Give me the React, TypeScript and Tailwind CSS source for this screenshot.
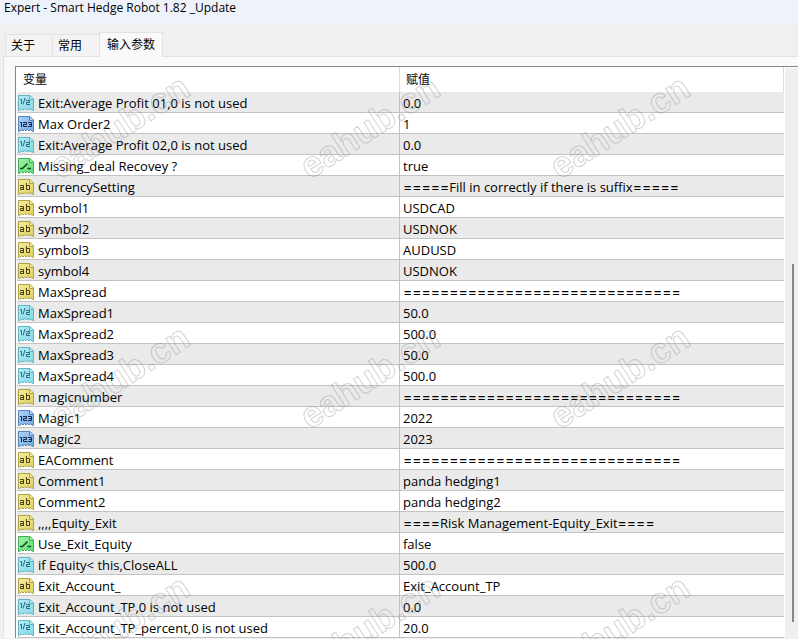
type Kind = "double" | "int" | "bool" | "string";

const rows: [Kind, string, string][] = [
  ["double", "Exit:Average Profit 01,0 is not used", "0.0"],
  ["int", "Max Order2", "1"],
  ["double", "Exit:Average Profit 02,0 is not used", "0.0"],
  ["bool", "Missing_deal Recovey ?", "true"],
  ["string", "CurrencySetting", "=====Fill in correctly if there is suffix====="],
  ["string", "symbol1", "USDCAD"],
  ["string", "symbol2", "USDNOK"],
  ["string", "symbol3", "AUDUSD"],
  ["string", "symbol4", "USDNOK"],
  ["string", "MaxSpread", "=============================="],
  ["double", "MaxSpread1", "50.0"],
  ["double", "MaxSpread2", "500.0"],
  ["double", "MaxSpread3", "50.0"],
  ["double", "MaxSpread4", "500.0"],
  ["string", "magicnumber", "=============================="],
  ["int", "Magic1", "2022"],
  ["int", "Magic2", "2023"],
  ["string", "EAComment", "=============================="],
  ["string", "Comment1", "panda hedging1"],
  ["string", "Comment2", "panda hedging2"],
  ["string", ",,,,Equity_Exit", "====Risk Management-Equity_Exit===="],
  ["bool", "Use_Exit_Equity", "false"],
  ["double", "if Equity< this,CloseALL", "500.0"],
  ["string", "Exit_Account_", "Exit_Account_TP"],
  ["double", "Exit_Account_TP,0 is not used", "0.0"],
  ["double", "Exit_Account_TP_percent,0 is not used", "20.0"],
];

const palette: Record<Kind, { light: string; fill: string; edge: string; ink: string }> = {
  double: { light: "#b5ecf5", fill: "#84d9e8", edge: "#5fb4c6", ink: "#1f6f80" },
  int: { light: "#b0d3f7", fill: "#74a9e0", edge: "#5585bd", ink: "#0b2550" },
  bool: { light: "#a0f3a5", fill: "#62dc78", edge: "#3fae58", ink: "#0a4a1c" },
  string: { light: "#f5ec9c", fill: "#dfd062", edge: "#b3a243", ink: "#4a4010" },
};

const glyphs: Record<Kind, string> = {
  double: "M2 4.5h1.5V9M7 3 5 9.5M8 5.5h3.5v2h-3v2H12",
  int: "M2 6.5h1.5V11M5 6.5h3.5v2h-3v2H9M10 6.5h3.5v4H10M11 8.5h3",
  bool: "M2 10.5h2.5L9.5 5.5M9.5 10.5H13",
  string: "M2 6.5h3.5V11M5.5 8.5h-3v2h3M8.5 4v6.5h3v-4h-3",
};

function TypeIcon({ kind }: { kind: Kind }) {
  const c = palette[kind];
  return (
    <svg width="16" height="16" viewBox="0 0 16 16" className="block shrink-0" aria-hidden="true">
      <defs>
        <linearGradient id={`fill-${kind}`} x1="0" y1="0" x2="1" y2="1">
          <stop offset="0" stopColor={c.light} />
          <stop offset="1" stopColor={c.fill} />
        </linearGradient>
      </defs>
      <path
        d="M.5.5H12L15.5 4v11.5l-2-.5-1-1.5-1.5 1.5-1.5-1.5L8 15l-1.5-1.5L5 15l-1.5-1.5-1 1.5-2 .5z"
        fill={`url(#fill-${kind})`}
        stroke={c.edge}
      />
      <path d="M11.5.8v3.7h3.7" fill={c.light} stroke={c.edge} />
      <path d={glyphs[kind]} fill="none" stroke={c.ink} strokeWidth={kind === "bool" ? 1.5 : 1} />
    </svg>
  );
}

const tabs = ["关于", "常用", "输入参数"];

// runs of "=" are set in a wider face than the words between them
function Value({ text }: { text: string }) {
  return (
    <>
      {text.split(/(=+)/).map((part, i) =>
        part.startsWith("=") ? (
          <span key={i} className="font-['Inter',sans-serif] text-[14px] leading-none">{part}</span>
        ) : (
          part
        ),
      )}
    </>
  );
}

function Watermark() {
  return (
    <svg className="pointer-events-none absolute inset-0 h-full w-full" aria-hidden="true">
      <defs>
        <pattern id="mark" width="250" height="250" patternUnits="userSpaceOnUse" x="50" y="0">
          <text
            transform="translate(10 180) rotate(-33)"
            fontFamily="Liberation Sans, sans-serif"
            fontSize="36"
            fontWeight="700"
            fill="none"
            stroke="#808080"
            strokeOpacity="0.35"
            strokeLinejoin="round"
          >
            eahub.cn
          </text>
        </pattern>
      </defs>
      <rect width="100%" height="100%" fill="url(#mark)" />
    </svg>
  );
}

export default function App() {
  return (
    <div className="relative min-h-screen overflow-hidden bg-[#f0f0f0] font-['Open_Sans','Noto_Sans_CJK_SC',sans-serif] text-[13px] text-black">
      <header className="h-[23px] bg-[#eef3fb] px-1 text-[12px] leading-4">Expert - Smart Hedge Robot 1.82 _Update</header>

      <main className="pt-[9px] pl-[3px]">
        <div role="tablist" className="flex items-end pl-[2px]">
          {tabs.map((tab, i) => (
            <button
              key={tab}
              role="tab"
              aria-selected={i === 2}
              className={
                i === 2
                  ? "-mb-px h-[25px] w-[64px] border border-b-0 border-[#e2e2e2] bg-[#f9f9f9] text-[12px]"
                  : "h-[22px] w-[47px] border border-r-0 border-b-0 border-[#e2e2e2] bg-[#f3f3f3] pl-[5px] text-left text-[12px]"
              }
            >
              {tab}
            </button>
          ))}
        </div>

        <section className="border-t border-l border-[#e2e2e2] bg-[#f9f9f9] pt-[9px] pl-[11px]">
          <div className="flex border-t border-l border-[#828790] bg-white">
            <table className="ml-px w-full table-fixed border-separate border-spacing-0 text-left">
              <colgroup>
                <col className="w-[383px]" />
                <col />
              </colgroup>
              <thead>
                <tr className="h-[25px]">
                  <th className="border-r border-[#dcdcdc] p-0 pl-[6px] text-[12px] font-normal">变量</th>
                  <th className="border-r border-[#dcdcdc] p-0 pl-[6px] text-[12px] font-normal">赋值</th>
                </tr>
              </thead>
              <tbody>
                {rows.map(([kind, name, value], i) => (
                  <tr key={i} className="h-[21px] odd:bg-[#eaeaea]">
                    <td className="border-r border-b border-[#c3c3c3] p-0 pt-[2px] leading-[18px]">
                      <div className="flex items-center gap-1 pl-px whitespace-nowrap">
                        <TypeIcon kind={kind} />
                        {name}
                      </div>
                    </td>
                    <td className="border-b border-[#c3c3c3] p-0 pt-[2px] pl-[3px] leading-[18px] whitespace-nowrap">
                      <Value text={value} />
                    </td>
                  </tr>
                ))}
              </tbody>
            </table>
            <div className="mt-px ml-px flex w-[13px] shrink-0 bg-[#efefef] pt-[196px] pb-4 pl-[7px]">
              <div className="w-[2px] bg-[#858585]" />
            </div>
          </div>
        </section>
      </main>

      <Watermark />
    </div>
  );
}
